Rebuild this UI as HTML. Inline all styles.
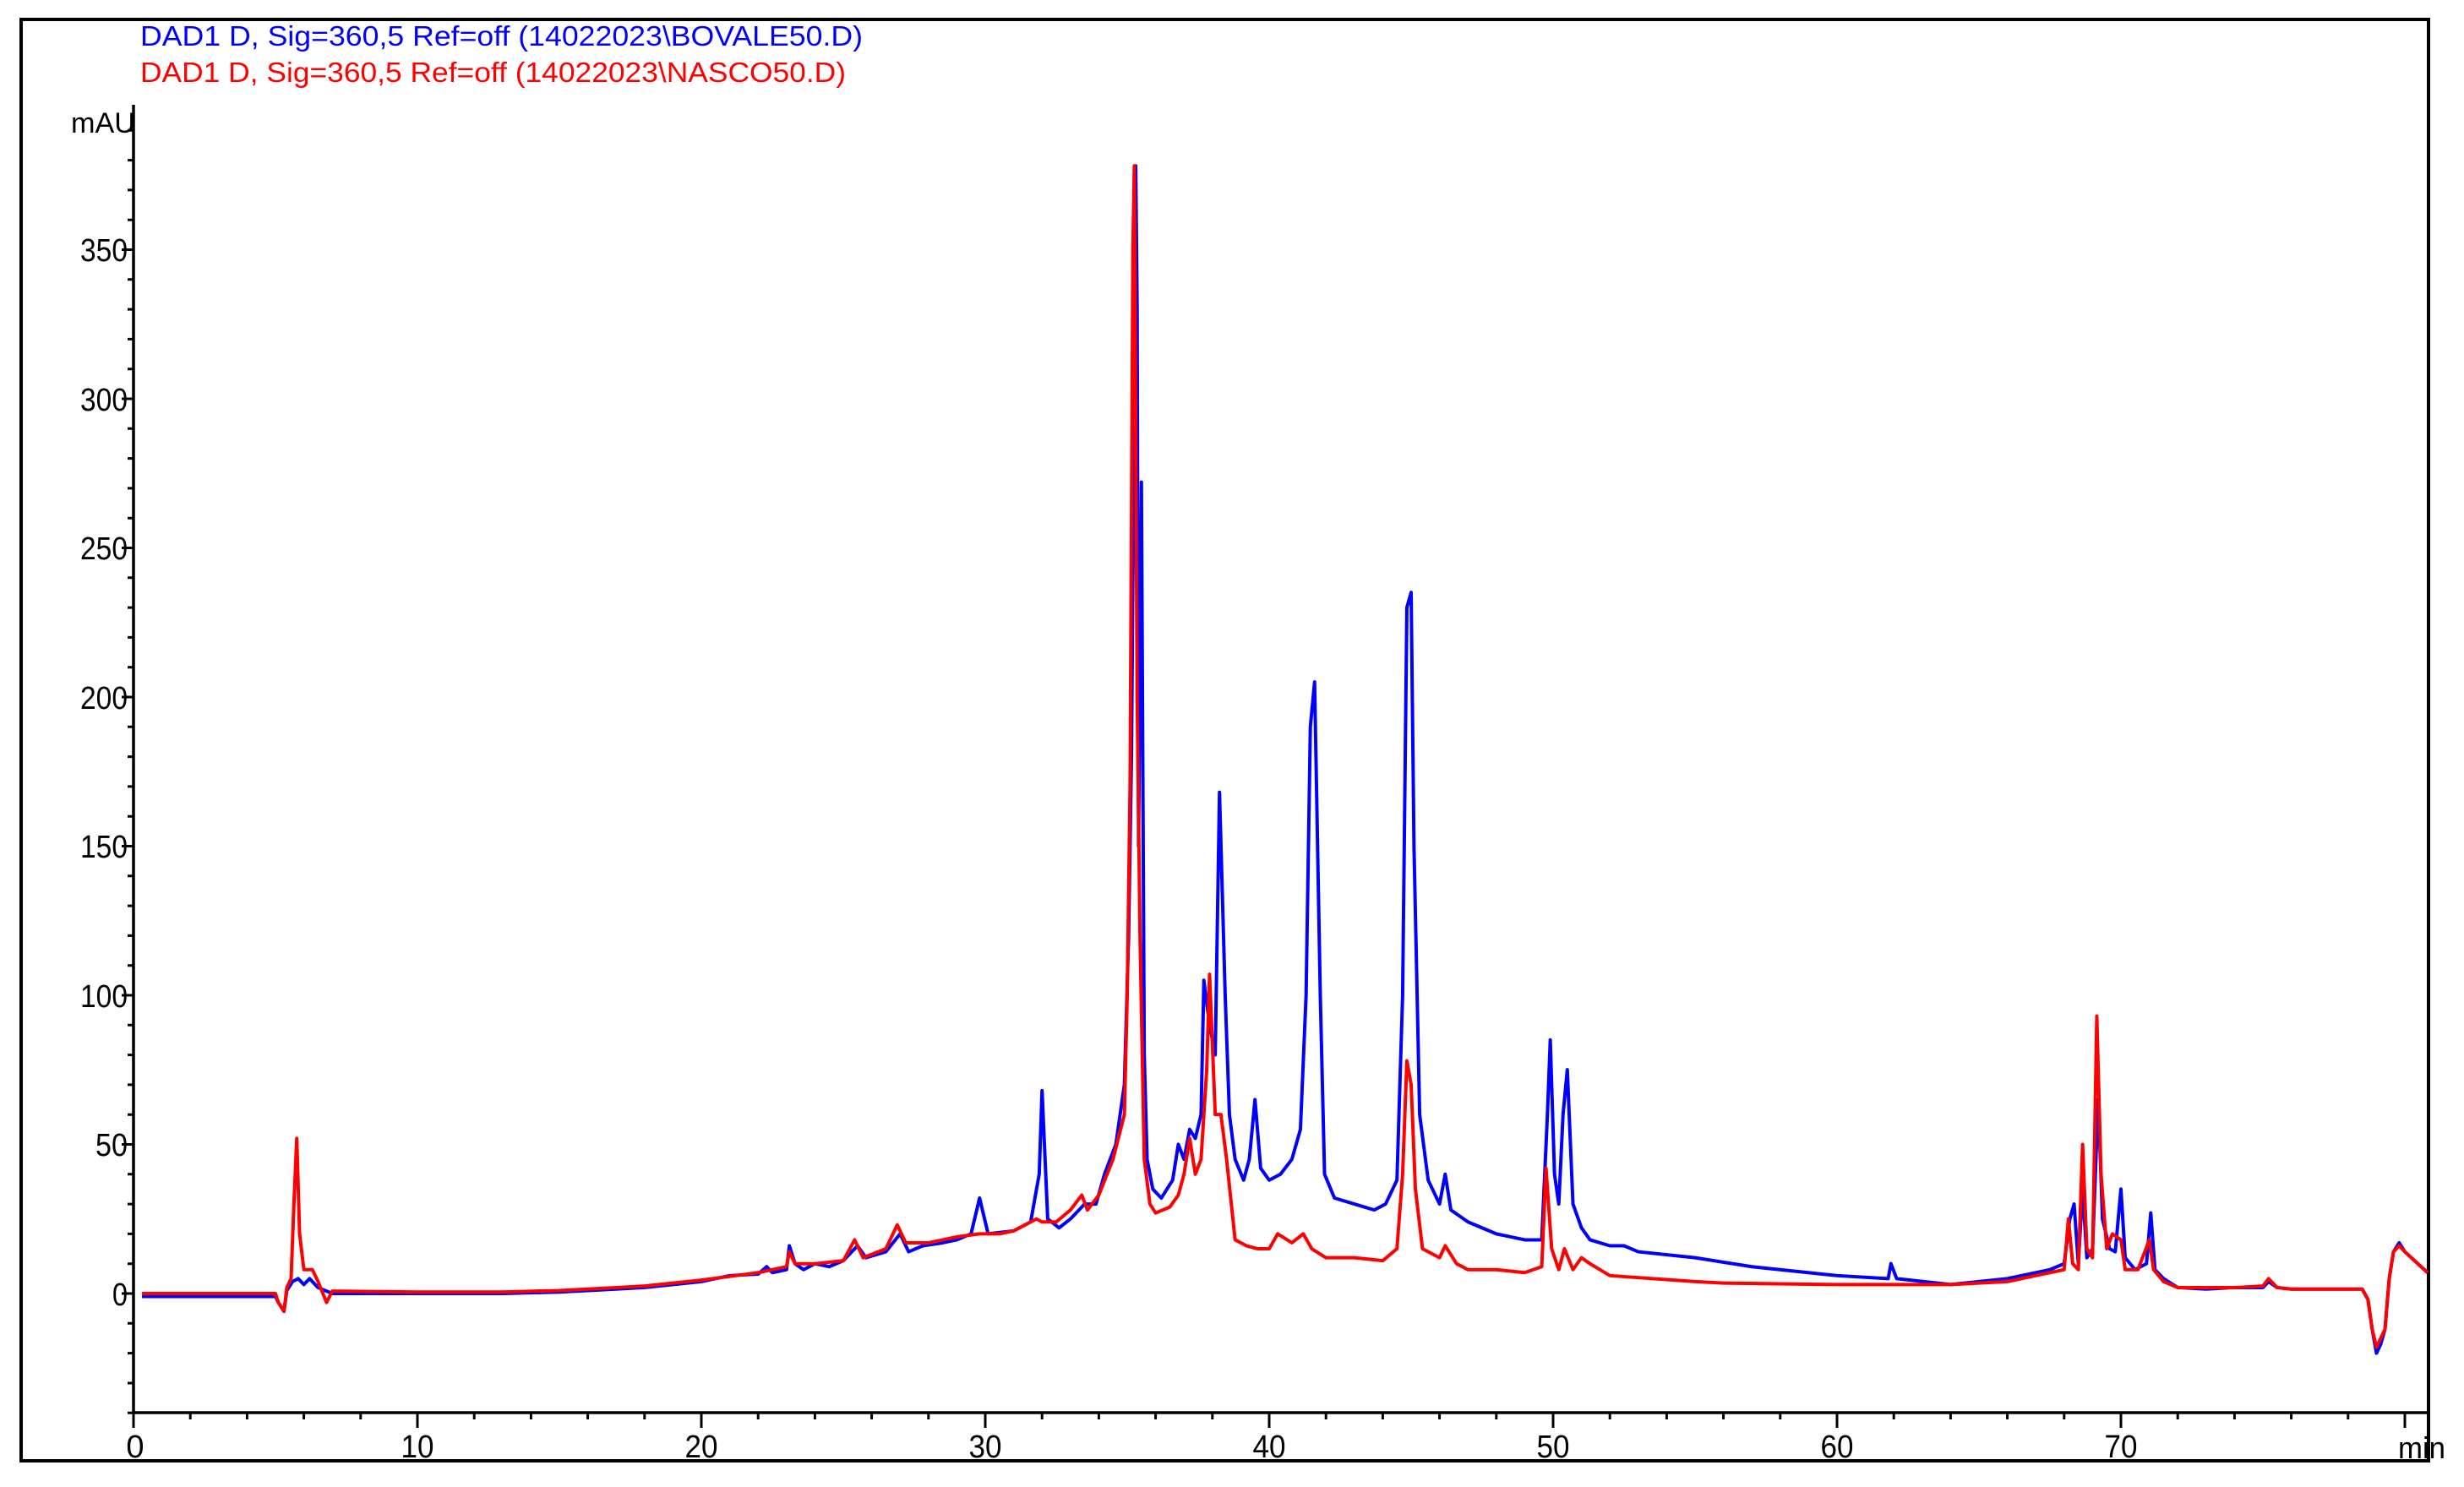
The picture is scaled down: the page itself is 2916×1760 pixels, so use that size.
<!DOCTYPE html>
<html><head><meta charset="utf-8"><style>
html,body{margin:0;padding:0;background:#fff;}
svg{display:block;}
text{font-family:"Liberation Sans",Arial,sans-serif;}
</style></head><body>
<svg width="2916" height="1760" viewBox="0 0 2916 1760" xmlns="http://www.w3.org/2000/svg">
<rect x="0" y="0" width="2916" height="1760" fill="#fff"/>
<rect x="25" y="23" width="2849" height="1706" fill="none" stroke="#000" stroke-width="4"/>
<text x="166" y="54" font-size="33" fill="#0000ff" textLength="855" lengthAdjust="spacingAndGlyphs">DAD1 D, Sig=360,5 Ref=off (14022023\BOVALE50.D)</text>
<text x="166" y="97" font-size="33" fill="#ff0000" textLength="835" lengthAdjust="spacingAndGlyphs">DAD1 D, Sig=360,5 Ref=off (14022023\NASCO50.D)</text>
<text x="84" y="157" font-size="34" fill="#000" textLength="76" lengthAdjust="spacingAndGlyphs">mAU</text>
<line x1="158" y1="124" x2="158" y2="1673" stroke="#000" stroke-width="3.5"/>
<line x1="158" y1="1672" x2="2874" y2="1672" stroke="#000" stroke-width="3.5"/>
<g stroke="#000" stroke-width="3">
<path d="M151 1672.2H158M151 1637H158M151 1601.6H158M151 1566.3H158M151 1495.7H158M151 1460.4H158M151 1425.1H158M151 1389.8H158M151 1319.2H158M151 1283.9H158M151 1248.6H158M151 1213.3H158M151 1142.7H158M151 1107.4H158M151 1072.1H158M151 1036.8H158M151 966.2H158M151 930.9H158M151 895.6H158M151 860.3H158M151 789.7H158M151 754.4H158M151 719.1H158M151 683.8H158M151 613.2H158M151 577.9H158M151 542.6H158M151 507.3H158M151 436.7H158M151 401.4H158M151 366.1H158M151 330.8H158M151 260.2H158M151 224.9H158M151 189.6H158M151 154.3H158"/>
<path d="M144 1531H158M144 1354.5H158M144 1178H158M144 1001.5H158M144 825H158M144 648.5H158M144 472H158M144 295.5H158"/>
<path d="M225.2 1672v8M292.4 1672v8M359.6 1672v8M426.8 1672v8M561.2 1672v8M628.4 1672v8M695.6 1672v8M762.8 1672v8M897.2 1672v8M964.4 1672v8M1031.6 1672v8M1098.8 1672v8M1233.2 1672v8M1300.4 1672v8M1367.6 1672v8M1434.8 1672v8M1569.2 1672v8M1636.4 1672v8M1703.6 1672v8M1770.8 1672v8M1905.2 1672v8M1972.4 1672v8M2039.6 1672v8M2106.8 1672v8M2241.2 1672v8M2308.4 1672v8M2375.6 1672v8M2442.8 1672v8M2577.2 1672v8M2644.4 1672v8M2711.6 1672v8M2778.8 1672v8"/>
<path d="M158 1672v18M494 1672v18M830 1672v18M1166 1672v18M1502 1672v18M1838 1672v18M2174 1672v18M2510 1672v18M2846 1672v18"/>
</g>
<g font-size="38" fill="#000" text-anchor="end">
<text x="151" y="1545" textLength="18" lengthAdjust="spacingAndGlyphs">0</text>
<text x="151" y="1368" textLength="38" lengthAdjust="spacingAndGlyphs">50</text>
<text x="151" y="1192" textLength="56" lengthAdjust="spacingAndGlyphs">100</text>
<text x="151" y="1015" textLength="56" lengthAdjust="spacingAndGlyphs">150</text>
<text x="151" y="839" textLength="56" lengthAdjust="spacingAndGlyphs">200</text>
<text x="151" y="662" textLength="56" lengthAdjust="spacingAndGlyphs">250</text>
<text x="151" y="486" textLength="56" lengthAdjust="spacingAndGlyphs">300</text>
<text x="151" y="309" textLength="56" lengthAdjust="spacingAndGlyphs">350</text>
</g>
<g font-size="38" fill="#000" text-anchor="middle">
<text x="160" y="1725">0</text>
<text x="494" y="1725" textLength="39" lengthAdjust="spacingAndGlyphs">10</text>
<text x="830" y="1725" textLength="39" lengthAdjust="spacingAndGlyphs">20</text>
<text x="1166" y="1725" textLength="39" lengthAdjust="spacingAndGlyphs">30</text>
<text x="1502" y="1725" textLength="39" lengthAdjust="spacingAndGlyphs">40</text>
<text x="1838" y="1725" textLength="39" lengthAdjust="spacingAndGlyphs">50</text>
<text x="2174" y="1725" textLength="39" lengthAdjust="spacingAndGlyphs">60</text>
<text x="2510" y="1725" textLength="39" lengthAdjust="spacingAndGlyphs">70</text>
</g>
<text x="2838" y="1726" font-size="36" fill="#000" textLength="56" lengthAdjust="spacingAndGlyphs">min</text>
<g transform="matrix(33.6 0 0 -3.531 158 1531)" fill="none" stroke-linejoin="round">
<polyline vector-effect="non-scaling-stroke" stroke="#0000ff" stroke-width="4" points="
0.3,-1 5,-1 5.1,-3 5.3,-6 5.4,1 5.6,4 5.8,5 6,3 6.2,5 6.5,2 7,0 10,0 13,0 15,0.5 17,1.5 18,2 20,4 21,6 22,6.5 22.3,9 22.5,7 23,8 23.1,16 23.3,10 23.6,8 24,10 24.5,9 25,11 25.5,16 25.8,12 26.5,14 27,20 27.3,14 27.8,16 28.5,17 29,18 29.5,20 29.8,32 30.1,20 31,21 31.6,24 31.9,40 32,68 32.2,25 32.6,22 33,25 33.5,30 33.9,30 34.2,40 34.6,50 34.9,70 35.05,120 35.15,180 35.25,300 35.3,378 35.35,330 35.4,150 35.5,272 35.6,80 35.7,45 35.9,35 36.2,32 36.6,38 36.8,50 37,45 37.2,55 37.4,52 37.6,60 37.7,105 37.9,90 38.1,80 38.25,168 38.45,100 38.6,60 38.8,45 39.1,38 39.3,45 39.5,65 39.7,42 40,38 40.4,40 40.8,45 41.1,55 41.3,100 41.45,190 41.6,205 41.8,100 41.95,40 42.3,32 43,30 43.7,28 44.1,30 44.5,38 44.7,100 44.85,230 45,235 45.1,150 45.3,60 45.6,38 46,30 46.2,40 46.4,28 47,24 48,20 49,18 49.6,18 49.8,60 49.9,85 50.05,40 50.2,30 50.35,60 50.5,75 50.7,30 51,22 51.3,18 52,16 52.5,16 53,14 55,12 57,9 60,6 61.8,5 61.9,10 62.1,5 64,3 66,5 67,7 67.5,8 68,10 68.2,25 68.35,30 68.5,10 68.65,35 68.8,12 69,15 69.1,40 69.2,65 69.35,25 69.6,15 69.8,14 70,35 70.15,12 70.5,8 70.9,10 71.05,27 71.2,8 71.5,5 72,2 73,1.5 74,2 75,2 75.2,4 75.5,2 76,1.5 78.5,1.5 78.7,-2 78.85,-12 79,-20 79.15,-17 79.3,-12 79.45,5 79.6,14 79.8,17 80,14 80.8,7"/>
<polyline vector-effect="non-scaling-stroke" stroke="#ff0000" stroke-width="4" points="
0.3,0 5,0 5.1,-3 5.3,-6 5.4,2 5.55,5 5.65,30 5.75,52 5.85,20 6,8 6.3,8 6.5,4 6.8,-3 7,0.8 10,0.5 13,0.5 15,1 17,2 18,2.5 20,4.5 22,7 23,9 23.1,14 23.3,10 24,10 25,11 25.4,18 25.7,12 26.5,15 26.9,23 27.2,17 28,17 29,19 29.8,20 30.5,20 31,21 31.8,25 32,24 32.5,24 33,28 33.4,33 33.6,28 34,33 34.5,45 34.9,60 35,100 35.1,170 35.2,350 35.25,378 35.35,200 35.45,120 35.6,45 35.8,30 36,27 36.5,29 36.8,33 37,40 37.2,52 37.4,40 37.6,45 37.8,75 37.9,107 38.1,60 38.3,60 38.5,45 38.8,18 39.2,16 39.6,15 40,15 40.3,20 40.8,17 41.2,20 41.5,15 42,12 43,12 44,11 44.5,15 44.7,40 44.85,78 45,70 45.15,35 45.4,15 46,12 46.2,16 46.6,10 47,8 48,8 49,7 49.6,9 49.75,42 49.95,15 50.2,8 50.4,15 50.7,8 51,12 51.3,10 52,6 55,4 56,3.5 60,3 62,3 64,3 66,4 67,6 68,8 68.15,25 68.3,10 68.5,8 68.65,50 68.8,15 69,12 69.15,93 69.3,40 69.5,15 69.7,20 70,18 70.15,8 70.6,8 71,18 71.15,8 71.5,4 72,2 73,2 74,2 75,2.5 75.2,5 75.5,2 76,1.5 78.5,1.5 78.7,-2 78.85,-12 79,-18 79.15,-15 79.3,-12 79.45,5 79.6,14 79.8,16 80,14 80.8,7"/>
</g>
</svg>
</body></html>
